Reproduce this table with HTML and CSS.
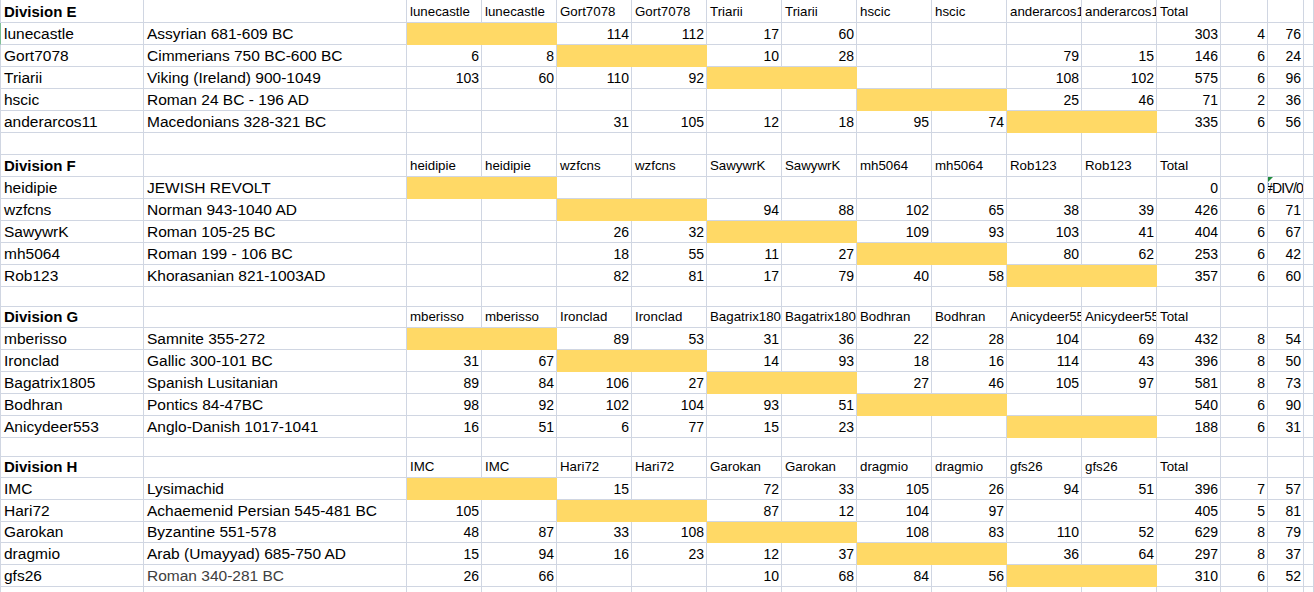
FILE: index.html
```html
<!DOCTYPE html>
<html>
<head>
<meta charset="utf-8">
<link rel="stylesheet" href="styles.css">
</head>
<body>
<div class="sheet">
<!-- Division E -->
<div class="c a d">Division E</div><div class="c"></div><div class="c h">lunecastle</div><div class="c h">lunecastle</div><div class="c h">Gort7078</div><div class="c h">Gort7078</div><div class="c h">Triarii</div><div class="c h">Triarii</div><div class="c h">hscic</div><div class="c h">hscic</div><div class="c h">anderarcos11</div><div class="c h">anderarcos11</div><div class="c h">Total</div><div class="c"></div><div class="c"></div><div class="c"></div>
<div class="c a sel">lunecastle</div><div class="c">Assyrian 681-609 BC</div><div class="c y"></div><div class="c y"></div><div class="c n">114</div><div class="c n">112</div><div class="c n">17</div><div class="c n">60</div><div class="c"></div><div class="c"></div><div class="c"></div><div class="c"></div><div class="c n">303</div><div class="c n">4</div><div class="c n">76</div><div class="c"></div>
<div class="c a">Gort7078</div><div class="c">Cimmerians 750 BC-600 BC</div><div class="c n">6</div><div class="c n">8</div><div class="c y"></div><div class="c y"></div><div class="c n">10</div><div class="c n">28</div><div class="c"></div><div class="c"></div><div class="c n">79</div><div class="c n">15</div><div class="c n">146</div><div class="c n">6</div><div class="c n">24</div><div class="c"></div>
<div class="c a">Triarii</div><div class="c">Viking (Ireland) 900-1049</div><div class="c n">103</div><div class="c n">60</div><div class="c n">110</div><div class="c n">92</div><div class="c y"></div><div class="c y"></div><div class="c"></div><div class="c"></div><div class="c n">108</div><div class="c n">102</div><div class="c n">575</div><div class="c n">6</div><div class="c n">96</div><div class="c"></div>
<div class="c a">hscic</div><div class="c">Roman 24 BC - 196 AD</div><div class="c"></div><div class="c"></div><div class="c"></div><div class="c"></div><div class="c"></div><div class="c"></div><div class="c y"></div><div class="c y"></div><div class="c n">25</div><div class="c n">46</div><div class="c n">71</div><div class="c n">2</div><div class="c n">36</div><div class="c"></div>
<div class="c a">anderarcos11</div><div class="c">Macedonians 328-321 BC</div><div class="c"></div><div class="c"></div><div class="c n">31</div><div class="c n">105</div><div class="c n">12</div><div class="c n">18</div><div class="c n">95</div><div class="c n">74</div><div class="c y"></div><div class="c y"></div><div class="c n">335</div><div class="c n">6</div><div class="c n">56</div><div class="c"></div>
<div class="c a"></div><div class="c"></div><div class="c"></div><div class="c"></div><div class="c"></div><div class="c"></div><div class="c"></div><div class="c"></div><div class="c"></div><div class="c"></div><div class="c"></div><div class="c"></div><div class="c"></div><div class="c"></div><div class="c"></div><div class="c"></div>
<!-- Division F -->
<div class="c a d">Division F</div><div class="c"></div><div class="c h">heidipie</div><div class="c h">heidipie</div><div class="c h">wzfcns</div><div class="c h">wzfcns</div><div class="c h">SawywrK</div><div class="c h">SawywrK</div><div class="c h">mh5064</div><div class="c h">mh5064</div><div class="c h">Rob123</div><div class="c h">Rob123</div><div class="c h">Total</div><div class="c"></div><div class="c"></div><div class="c"></div>
<div class="c a">heidipie</div><div class="c">JEWISH REVOLT</div><div class="c y"></div><div class="c y"></div><div class="c"></div><div class="c"></div><div class="c"></div><div class="c"></div><div class="c"></div><div class="c"></div><div class="c"></div><div class="c"></div><div class="c n">0</div><div class="c n">0</div><div class="c e"><span class="err">#DIV/0!</span></div><div class="c"></div>
<div class="c a">wzfcns</div><div class="c">Norman 943-1040 AD</div><div class="c"></div><div class="c"></div><div class="c y"></div><div class="c y"></div><div class="c n">94</div><div class="c n">88</div><div class="c n">102</div><div class="c n">65</div><div class="c n">38</div><div class="c n">39</div><div class="c n">426</div><div class="c n">6</div><div class="c n">71</div><div class="c"></div>
<div class="c a">SawywrK</div><div class="c">Roman 105-25 BC</div><div class="c"></div><div class="c"></div><div class="c n">26</div><div class="c n">32</div><div class="c y"></div><div class="c y"></div><div class="c n">109</div><div class="c n">93</div><div class="c n">103</div><div class="c n">41</div><div class="c n">404</div><div class="c n">6</div><div class="c n">67</div><div class="c"></div>
<div class="c a">mh5064</div><div class="c">Roman 199 - 106 BC</div><div class="c"></div><div class="c"></div><div class="c n">18</div><div class="c n">55</div><div class="c n">11</div><div class="c n">27</div><div class="c y"></div><div class="c y"></div><div class="c n">80</div><div class="c n">62</div><div class="c n">253</div><div class="c n">6</div><div class="c n">42</div><div class="c"></div>
<div class="c a">Rob123</div><div class="c">Khorasanian 821-1003AD</div><div class="c"></div><div class="c"></div><div class="c n">82</div><div class="c n">81</div><div class="c n">17</div><div class="c n">79</div><div class="c n">40</div><div class="c n">58</div><div class="c y"></div><div class="c y"></div><div class="c n">357</div><div class="c n">6</div><div class="c n">60</div><div class="c"></div>
<div class="c a"></div><div class="c"></div><div class="c"></div><div class="c"></div><div class="c"></div><div class="c"></div><div class="c"></div><div class="c"></div><div class="c"></div><div class="c"></div><div class="c"></div><div class="c"></div><div class="c"></div><div class="c"></div><div class="c"></div><div class="c"></div>
<!-- Division G -->
<div class="c a d">Division G</div><div class="c"></div><div class="c h">mberisso</div><div class="c h">mberisso</div><div class="c h">Ironclad</div><div class="c h">Ironclad</div><div class="c h">Bagatrix1805</div><div class="c h">Bagatrix1805</div><div class="c h">Bodhran</div><div class="c h">Bodhran</div><div class="c h">Anicydeer553</div><div class="c h">Anicydeer553</div><div class="c h">Total</div><div class="c"></div><div class="c"></div><div class="c"></div>
<div class="c a">mberisso</div><div class="c">Samnite 355-272</div><div class="c y"></div><div class="c y"></div><div class="c n">89</div><div class="c n">53</div><div class="c n">31</div><div class="c n">36</div><div class="c n">22</div><div class="c n">28</div><div class="c n">104</div><div class="c n">69</div><div class="c n">432</div><div class="c n">8</div><div class="c n">54</div><div class="c"></div>
<div class="c a">Ironclad</div><div class="c">Gallic 300-101 BC</div><div class="c n">31</div><div class="c n">67</div><div class="c y"></div><div class="c y"></div><div class="c n">14</div><div class="c n">93</div><div class="c n">18</div><div class="c n">16</div><div class="c n">114</div><div class="c n">43</div><div class="c n">396</div><div class="c n">8</div><div class="c n">50</div><div class="c"></div>
<div class="c a">Bagatrix1805</div><div class="c">Spanish Lusitanian</div><div class="c n">89</div><div class="c n">84</div><div class="c n">106</div><div class="c n">27</div><div class="c y"></div><div class="c y"></div><div class="c n">27</div><div class="c n">46</div><div class="c n">105</div><div class="c n">97</div><div class="c n">581</div><div class="c n">8</div><div class="c n">73</div><div class="c"></div>
<div class="c a">Bodhran</div><div class="c">Pontics 84-47BC</div><div class="c n">98</div><div class="c n">92</div><div class="c n">102</div><div class="c n">104</div><div class="c n">93</div><div class="c n">51</div><div class="c y"></div><div class="c y"></div><div class="c"></div><div class="c"></div><div class="c n">540</div><div class="c n">6</div><div class="c n">90</div><div class="c"></div>
<div class="c a">Anicydeer553</div><div class="c">Anglo-Danish 1017-1041</div><div class="c n">16</div><div class="c n">51</div><div class="c n">6</div><div class="c n">77</div><div class="c n">15</div><div class="c n">23</div><div class="c"></div><div class="c"></div><div class="c y"></div><div class="c y"></div><div class="c n">188</div><div class="c n">6</div><div class="c n">31</div><div class="c"></div>
<div class="c a"></div><div class="c"></div><div class="c"></div><div class="c"></div><div class="c"></div><div class="c"></div><div class="c"></div><div class="c"></div><div class="c"></div><div class="c"></div><div class="c"></div><div class="c"></div><div class="c"></div><div class="c"></div><div class="c"></div><div class="c"></div>
<!-- Division H -->
<div class="c a d">Division H</div><div class="c"></div><div class="c h">IMC</div><div class="c h">IMC</div><div class="c h">Hari72</div><div class="c h">Hari72</div><div class="c h">Garokan</div><div class="c h">Garokan</div><div class="c h">dragmio</div><div class="c h">dragmio</div><div class="c h">gfs26</div><div class="c h">gfs26</div><div class="c h">Total</div><div class="c"></div><div class="c"></div><div class="c"></div>
<div class="c a">IMC</div><div class="c">Lysimachid</div><div class="c y"></div><div class="c y"></div><div class="c n">15</div><div class="c"></div><div class="c n">72</div><div class="c n">33</div><div class="c n">105</div><div class="c n">26</div><div class="c n">94</div><div class="c n">51</div><div class="c n">396</div><div class="c n">7</div><div class="c n">57</div><div class="c"></div>
<div class="c a">Hari72</div><div class="c">Achaemenid Persian 545-481 BC</div><div class="c n">105</div><div class="c"></div><div class="c y"></div><div class="c y"></div><div class="c n">87</div><div class="c n">12</div><div class="c n">104</div><div class="c n">97</div><div class="c"></div><div class="c"></div><div class="c n">405</div><div class="c n">5</div><div class="c n">81</div><div class="c"></div>
<div class="c a">Garokan</div><div class="c">Byzantine 551-578</div><div class="c n">48</div><div class="c n">87</div><div class="c n">33</div><div class="c n">108</div><div class="c y"></div><div class="c y"></div><div class="c n">108</div><div class="c n">83</div><div class="c n">110</div><div class="c n">52</div><div class="c n">629</div><div class="c n">8</div><div class="c n">79</div><div class="c"></div>
<div class="c a">dragmio</div><div class="c">Arab (Umayyad) 685-750 AD</div><div class="c n">15</div><div class="c n">94</div><div class="c n">16</div><div class="c n">23</div><div class="c n">12</div><div class="c n">37</div><div class="c y"></div><div class="c y"></div><div class="c n">36</div><div class="c n">64</div><div class="c n">297</div><div class="c n">8</div><div class="c n">37</div><div class="c"></div>
<div class="c a">gfs26</div><div class="c g">Roman 340-281 BC</div><div class="c n">26</div><div class="c n">66</div><div class="c"></div><div class="c"></div><div class="c n">10</div><div class="c n">68</div><div class="c n">84</div><div class="c n">56</div><div class="c y"></div><div class="c y"></div><div class="c n">310</div><div class="c n">6</div><div class="c n">52</div><div class="c"></div>
<div class="c a"></div><div class="c"></div><div class="c"></div><div class="c"></div><div class="c"></div><div class="c"></div><div class="c"></div><div class="c"></div><div class="c"></div><div class="c"></div><div class="c"></div><div class="c"></div><div class="c"></div><div class="c"></div><div class="c"></div><div class="c"></div>
</div>
</body>
</html>
```
FILE: styles.css
```css
* { box-sizing: border-box; }
html, body { margin: 0; padding: 0; background: #fff; }
body { width: 1314px; height: 592px; overflow: hidden; }

.sheet {
  display: grid;
  grid-template-columns: 144px 263px repeat(10, 75px) 64px 47px 36px 1fr;
  grid-template-rows:
    23px 22px 22px 22px 22px 22px
    22px
    22px 22px 22px 22px 22px 22px
    20px
    21px 22px 22px 22px 22px 22px
    19px
    21px 22px 22px 21px 22px 22px
    22px;
  font-family: "Liberation Sans", Arial, sans-serif;
  color: #000;
}

.c {
  min-width: 0;
  display: flex;
  align-items: flex-end;
  padding: 0 2px 2px 3px;
  border-right: 1px solid #d0d6e2;
  border-bottom: 1px solid #d0d6e2;
  overflow: hidden;
  white-space: nowrap;
  font-size: 15.5px;
  line-height: 16px;
}

.a { border-left: 1px solid #d0d6e2; }
.sel { border-left-color: #7fbf96; }

.d { font-weight: bold; font-size: 15px; }
.h { font-size: 13.3px; }
.n { justify-content: flex-end; font-size: 14px; }
.g { color: #404040; }

.y {
  background: #ffd966;
  border-right-color: #ffd966;
  border-bottom-color: #ffd966;
}

.e {
  position: relative;
  justify-content: flex-start;
  padding-left: 0;
  padding-right: 0;
  font-size: 14px;
}
.err {
  flex: none;
  margin-left: -3px;
  letter-spacing: -0.8px;
}
.e::before {
  content: "";
  position: absolute;
  top: 0;
  left: 0;
  z-index: 1;
  border-top: 5px solid #1f8b3c;
  border-right: 5px solid transparent;
}
```
